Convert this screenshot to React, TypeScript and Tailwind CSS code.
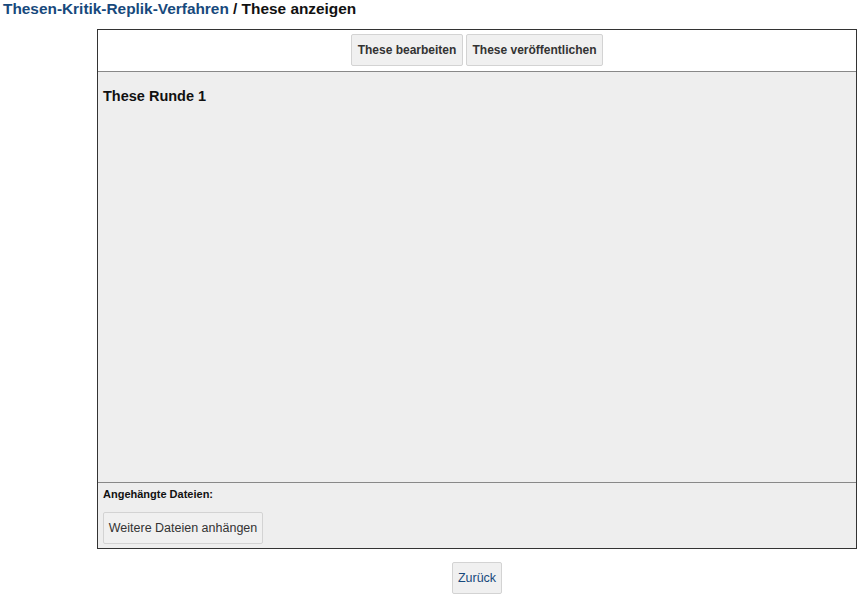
export default function App() {
  return (
    <div className="min-h-[596px] bg-white font-['Liberation_Sans',Arial,sans-serif] text-[#222]">
      {/* Breadcrumb title */}
      <h1 className="pl-[3px] pt-0 text-[15.4px] font-bold leading-[18px]">
        <a href="#" className="text-[#17497c]">Thesen-Kritik-Replik-Verfahren</a>
        <span className="text-[#111]"> / These anzeigen</span>
      </h1>

      {/* Main panel */}
      <div className="ml-[97px] mt-[11px] w-[760px] border border-[#333]">
        <div className="flex justify-center gap-[3px] border-b border-[#888] bg-white pt-[4px] pb-[5px]">
          <button className="h-[32px] w-[112px] rounded-[2px] border border-[#d3d3d3] bg-[#f0f0f0] text-[12px] font-bold text-[#333]">
            These bearbeiten
          </button>
          <button className="h-[32px] w-[137px] rounded-[2px] border border-[#d3d3d3] bg-[#f0f0f0] text-[12px] font-bold text-[#333]">
            These veröffentlichen
          </button>
        </div>

        <div className="h-[411px] border-b border-[#888] bg-[#eeeeee] px-[5px] pt-[15px]">
          <h2 className="text-[14.5px] font-bold leading-[18px] text-[#111]">These Runde 1</h2>
        </div>

        <div className="h-[65px] bg-[#eeeeee] px-[5px] pt-[5px]">
          <div className="text-[11px] font-bold leading-[13px] text-[#111]">Angehängte Dateien:</div>
          <button className="mt-[11px] h-[32px] w-[160px] rounded-[2px] border border-[#d3d3d3] bg-[#f0f0f0] text-[12.5px] text-[#333]">
            Weitere Dateien anhängen
          </button>
        </div>
      </div>

      <div className="ml-[97px] flex w-[760px] justify-center pt-[13px]">
        <button className="h-[32px] w-[50px] rounded-[2px] border border-[#d3d3d3] bg-[#f0f0f0] text-[12.5px] text-[#17497c]">
          Zurück
        </button>
      </div>
    </div>
  );
}
